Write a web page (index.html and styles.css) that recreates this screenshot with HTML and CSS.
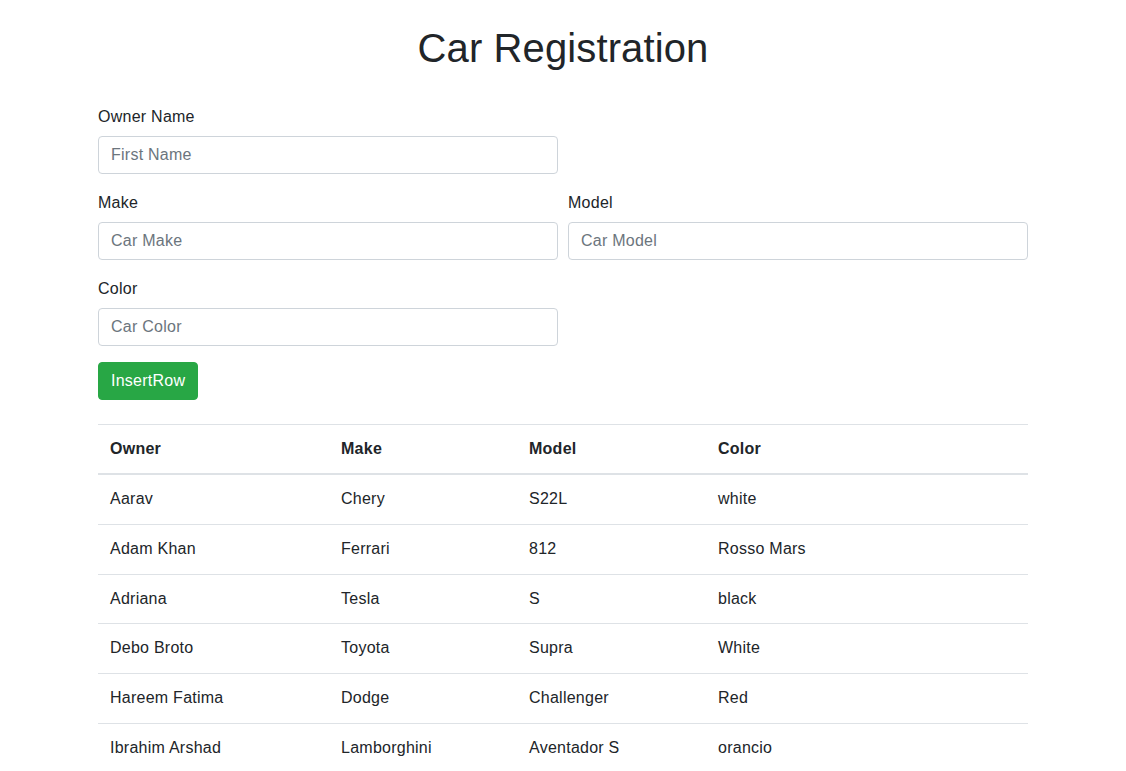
FILE: index.html
```html
<!DOCTYPE html>
<html lang="en">
<head>
<meta charset="utf-8">
<title>Car Registration</title>
<link rel="stylesheet" href="styles.css">
</head>
<body>
<div class="container">
  <h1 class="title">Car Registration</h1>
  <form class="form">
    <div class="form-row">
      <div class="col">
        <label class="label" for="owner">Owner Name</label>
        <input class="input" id="owner" type="text" placeholder="First Name">
      </div>
      <div class="col"></div>
    </div>
    <div class="form-row">
      <div class="col">
        <label class="label" for="make">Make</label>
        <input class="input" id="make" type="text" placeholder="Car Make">
      </div>
      <div class="col">
        <label class="label" for="model">Model</label>
        <input class="input" id="model" type="text" placeholder="Car Model">
      </div>
    </div>
    <div class="form-row">
      <div class="col">
        <label class="label" for="color">Color</label>
        <input class="input" id="color" type="text" placeholder="Car Color">
      </div>
      <div class="col"></div>
    </div>
    <button class="btn-success" type="button">InsertRow</button>
  </form>
  <table class="table">
    <colgroup>
      <col class="c-owner">
      <col class="c-make">
      <col class="c-model">
      <col class="c-color">
    </colgroup>
    <thead>
      <tr><th>Owner</th><th>Make</th><th>Model</th><th>Color</th></tr>
    </thead>
    <tbody>
      <tr><td>Aarav</td><td>Chery</td><td>S22L</td><td>white</td></tr>
      <tr><td>Adam Khan</td><td>Ferrari</td><td>812</td><td>Rosso Mars</td></tr>
      <tr><td>Adriana</td><td>Tesla</td><td>S</td><td>black</td></tr>
      <tr><td>Debo Broto</td><td>Toyota</td><td>Supra</td><td>White</td></tr>
      <tr><td>Hareem Fatima</td><td>Dodge</td><td>Challenger</td><td>Red</td></tr>
      <tr><td>Ibrahim Arshad</td><td>Lamborghini</td><td>Aventador S</td><td>orancio</td></tr>
    </tbody>
  </table>
</div>
</body>
</html>
```

FILE: styles.css
```css
* { box-sizing: border-box; }
html, body { margin: 0; padding: 0; }
body {
  font-family: "Liberation Sans", Arial, Helvetica, sans-serif;
  font-size: 16px;
  line-height: 1.5;
  letter-spacing: 0.25px;
  color: #212529;
  background: #fff;
}
.container {
  max-width: 960px;
  margin: 0 auto;
  padding: 0 15px;
}
.title {
  margin: 24px 0 32px;
  font-size: 40px;
  font-weight: 400;
  line-height: 1.2;
  letter-spacing: 0.12px;
  text-align: center;
}
.form-row {
  display: flex;
  margin: 0 -5px 16px;
}
.col {
  flex: 1 1 0;
  padding: 0 5px;
}
.label {
  display: block;
  padding-top: 1px;
  margin-bottom: 7px;
}
.input {
  display: block;
  width: 100%;
  height: 38px;
  padding: 6px 12px;
  font-family: inherit;
  font-size: 16px;
  line-height: 1.5;
  letter-spacing: 0.25px;
  color: #495057;
  background: #fff;
  border: 1px solid #ced4da;
  border-radius: 4px;
}
.input::placeholder { color: #6c757d; opacity: 1; }
.btn-success {
  display: inline-block;
  height: 38px;
  padding: 6px 12px;
  font-family: inherit;
  font-size: 16px;
  line-height: 1.5;
  letter-spacing: 0.25px;
  color: #fff;
  background: #28a745;
  border: 1px solid #28a745;
  border-radius: 4px;
  margin-bottom: 24px;
  cursor: pointer;
}
.table {
  width: 100%;
  border-collapse: collapse;
  margin-bottom: 16px;
}
.c-owner { width: 231px; }
.c-make { width: 188px; }
.c-model { width: 189px; }
.table th, .table td {
  padding: 12px;
  text-align: left;
  vertical-align: top;
  border-top: 1px solid #dee2e6;
}
.table td { line-height: 24.8px; }
.table th { font-weight: 700; }
.table thead th { border-bottom: 2px solid #dee2e6; }
```
